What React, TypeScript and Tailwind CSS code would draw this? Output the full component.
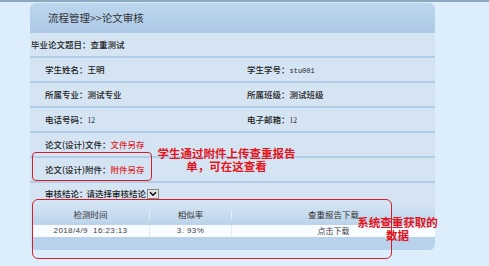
import React from "react";

const font = { fontFamily: '"Noto Sans CJK SC", "Noto Sans", sans-serif' };

function Row({ children, border = true }: { children: React.ReactNode; border?: boolean }) {
  return (
    <div className={`flex h-[25px] items-center bg-[#d5e4f3] ${border ? "border-b-2 border-[#b4cde6]" : ""}`}>
      {children}
    </div>
  );
}

function Cell({ children }: { children: React.ReactNode }) {
  return <div className="w-[202px] shrink-0 pl-[15px] text-[8.5px] font-medium leading-none text-[#222]">{children}</div>;
}

export default function App() {
  return (
    <div className="relative h-[266px] w-[489px] overflow-hidden bg-[#dcedfb]" style={font}>
      <div className="h-[2px] bg-[#8ea8c2]" />
      <div className="ml-[30px] mt-[1px] w-[405px] overflow-hidden rounded-[6px]">
        <div className="flex h-[30px] items-center bg-gradient-to-b from-[#bcd6ee] to-[#acc9e6] pl-[18px] text-[10.5px] text-[#333]">
          流程管理&gt;&gt;论文审核
        </div>
        <Row>
          <div className="pl-[1px] text-[8.5px] font-medium leading-none text-[#222]">毕业论文题目：查重测试</div>
        </Row>
        <Row>
          <Cell>学生姓名：王明</Cell>
          <Cell>
            学生学号：<span className="text-[7px] font-normal" style={{ fontFamily: '"Liberation Mono", monospace' }}>stu001</span>
          </Cell>
        </Row>
        <Row>
          <Cell>所属专业：测试专业</Cell>
          <Cell>所属班级：测试班级</Cell>
        </Row>
        <Row>
          <Cell>
            电话号码：<span className="text-[7.5px] font-normal" style={{ fontFamily: '"Liberation Serif", serif' }}>12</span>
          </Cell>
          <Cell>
            电子邮箱：<span className="text-[7.5px] font-normal" style={{ fontFamily: '"Liberation Serif", serif' }}>12</span>
          </Cell>
        </Row>
        <Row>
          <Cell>
            论文(设计)文件：<span className="text-[#e0262c]">文件另存</span>
          </Cell>
        </Row>
        <Row>
          <Cell>
            论文(设计)附件：<span className="text-[#e0262c]">附件另存</span>
          </Cell>
        </Row>
        <div className="flex h-[21px] items-center bg-[#d5e4f3] pl-[15px] text-[8.5px] font-medium leading-none text-[#222]">
          <span>审核结论：</span>
          <span className="-ml-[1px]">请选择审核结论</span>
          <span className="ml-[1px] flex h-[10px] w-[12px] items-center justify-center border border-[#8a8a8a] bg-[#e4e4e4]">
            <svg width="8" height="6" viewBox="0 0 8 6">
              <path d="M1 1.2 L4 4.2 L7 1.2" fill="none" stroke="#111" strokeWidth="1.6" />
            </svg>
          </span>
        </div>
        <div className="bg-[#d5e4f3] pl-[2px]">
          <div className="grid h-[21px] grid-cols-[118px_82px_1fr] items-center bg-gradient-to-b from-[#d3e4f3] to-[#bad3ea] text-[8.5px] leading-none text-[#333]">
            <div className="border-r border-[#e8f1fa] text-center">检测时间</div>
            <div className="border-r border-[#e8f1fa] text-center">相似率</div>
            <div className="text-center">查重报告下载</div>
          </div>
          <div className="grid h-[12px] grid-cols-[118px_82px_1fr] items-center bg-[#f8fbff] text-[8px] leading-none text-[#444]">
            <div className="h-full border-r border-[#e3ecf5] text-center leading-[12px] tracking-[0.4px]" style={{ fontFamily: '"Liberation Sans", sans-serif' }}>
              2018/4/9&nbsp;&nbsp;16:23:13
            </div>
            <div className="h-full border-r border-[#e3ecf5] text-center leading-[12px] tracking-[0.4px]" style={{ fontFamily: '"Liberation Sans", sans-serif' }}>
              3.&nbsp;93%
            </div>
            <div className="text-center">点击下载</div>
          </div>
          <div className="h-[13px] bg-[#b8d2eb]" />
        </div>
      </div>

      {/* annotation boxes */}
      <div className="absolute left-[32px] top-[152px] h-[29px] w-[120px] rounded-[4px] border border-[#d0202a]" />
      <div className="absolute left-[32px] top-[199px] h-[60px] w-[360px] rounded-[6px] border border-[#d0202a]" />

      <div className="absolute left-[154px] top-[147px] w-[145px] text-center text-[11.5px] font-bold leading-[13px] text-[#e3141c]">
        <div>学生通过附件上传查重报告</div>
        <div>单，可在这查看</div>
      </div>
      <div className="absolute left-[355px] top-[216px] w-[85px] text-center text-[11.5px] font-bold leading-[13px] text-[#e3141c]">
        <div>系统查重获取的</div>
        <div>数据</div>
      </div>
    </div>
  );
}
